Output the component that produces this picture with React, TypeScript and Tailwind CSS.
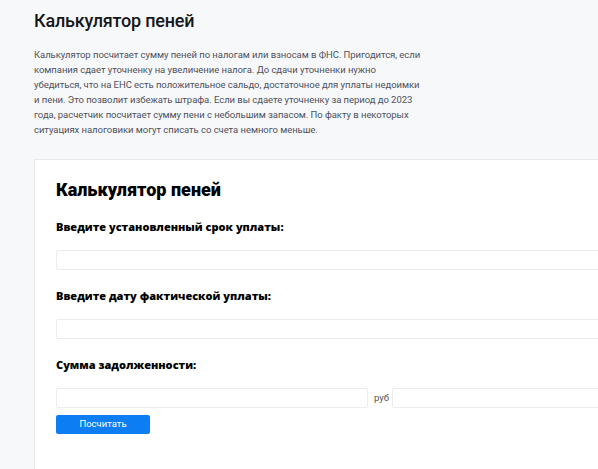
import React from "react";

const intro = [
  "Калькулятор посчитает сумму пеней по налогам или взносам в ФНС. Пригодится, если",
  "компания сдает уточненку на увеличение налога. До сдачи уточненки нужно",
  "убедиться, что на ЕНС есть положительное сальдо, достаточное для уплаты недоимки",
  "и пени. Это позволит избежать штрафа. Если вы сдаете уточненку за период до 2023",
  "года, расчетчик посчитает сумму пени с небольшим запасом. По факту в некоторых",
  "ситуациях налоговики могут списать со счета немного меньше.",
];

function Field({ label }: { label: string }) {
  return (
    <div>
      <div className="mt-[19px] font-['Open_Sans',sans-serif] text-[11px] leading-[14px] font-extrabold text-black">
        {label}
      </div>
      <input
        type="text"
        className="mt-[16px] block h-[20px] w-full rounded-[2px] border border-[#ececee] bg-white outline-none"
      />
    </div>
  );
}

export default function App() {
  return (
    <div className="min-h-screen overflow-hidden bg-[#f7f8fa] pl-[34px] pt-[9px] font-['Roboto',sans-serif]">
      <h1 className="text-[18px] leading-[24px] font-medium tracking-[-0.2px] text-[#16171a]">Калькулятор пеней</h1>

      <p className="mt-[14px] text-[9.5px] leading-[15px] tracking-[-0.05px] text-[#4d515c]">
        {intro.map((line) => (
          <span key={line} className="block whitespace-nowrap">
            {line}
          </span>
        ))}
      </p>

      {/* Calculator card */}
      <div className="mt-[22px] w-[700px] border-l border-t border-[#e6e8ec] bg-white pb-[40px] pl-[21px] pt-[18px]">
        <h2 className="text-[18px] leading-[24px] font-black text-black">Калькулятор пеней</h2>

        <div className="-mt-[1px]">
          <Field label="Введите установленный срок уплаты:" />
        </div>
        <div className="mt-[9px]">
          <Field label="Введите дату фактической уплаты:" />
        </div>

        <div className="mt-[9px]">
          <div className="mt-[19px] font-['Open_Sans',sans-serif] text-[11px] leading-[14px] font-extrabold text-black">
            Сумма задолженности:
          </div>
          <div className="mt-[16px] flex items-center">
            <input
              type="text"
              className="block h-[20px] w-[312px] rounded-[2px] border border-[#ececee] bg-white outline-none"
            />
            <span className="ml-[6px] mr-[3px] text-[9.5px] text-[#555]">руб</span>
            <input
              type="text"
              className="block h-[20px] flex-1 rounded-[2px] border border-[#ececee] bg-white outline-none"
            />
          </div>
        </div>

        <button
          type="button"
          className="mt-[7px] h-[19px] w-[94px] rounded-[2px] bg-[#0c7df2] text-[9.5px] font-normal text-white"
        >
          Посчитать
        </button>
      </div>
    </div>
  );
}
